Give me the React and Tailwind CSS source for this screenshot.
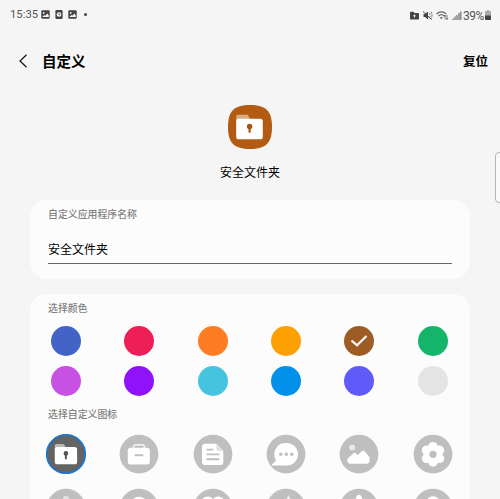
import React from "react";

const COLORS = [
  "bg-[#4463c6]", "bg-[#ee1f56]", "bg-[#ff7d22]", "bg-[#fca004]", "bg-[#9c5c24]", "bg-[#14b56a]",
  "bg-[#c751e2]", "bg-[#8f12fb]", "bg-[#46c3df]", "bg-[#0390ea]", "bg-[#5e5bf8]", "bg-[#e4e4e4]",
];

const G = "#bfbfbf";

function Folder({ hole }) {
  return (
    <>
      <path d="M8.8 17v-5.4c0-1 .6-1.6 1.6-1.6h6.4c.8 0 1.3.3 1.7 1l1.2 2.5v3z" fill="#fff" opacity=".55" />
      <rect x="8.8" y="13" width="22.3" height="17.3" rx="2.6" fill="#fff" />
      <circle cx="19.9" cy="19.4" r="2.3" fill={hole} />
      <rect x="18.9" y="20" width="2" height="5.4" rx=".8" fill={hole} />
    </>
  );
}

const ICONS = [
  <>
    <circle cx="20" cy="20.1" r="19.2" fill="#646464" stroke="#1c76c9" strokeWidth="1.8" />
    <Folder hole="#555" />
  </>,
  <>
    <path d="M14.6 15v-2.6c0-1 .6-1.6 1.6-1.6h7.6c1 0 1.6.6 1.6 1.6V15" fill="none" stroke="#eee" strokeWidth="1.8" />
    <rect x="8.8" y="13.7" width="22" height="16.7" rx="2.6" fill="#fff" />
    <path d="M16.500 21.300h7" stroke={G} strokeWidth="2" strokeLinecap="round" />
  </>,
  <>
    <path d="M12 9.7h11.3l7 7.2V28a3 3 0 0 1-3 3H12a3 3 0 0 1-3-3V12.7a3 3 0 0 1 3-3z" fill="#fff" />
    <path d="M23.3 9.7l7 7.2h-4.8a2.2 2.2 0 0 1-2.2-2.2z" fill="#e2e2e2" />
    <path d="M14.3 15.6h5.3M14.3 20.4h11.4M14.3 25.3h11.4" stroke={G} strokeWidth="1.9" strokeLinecap="round" />
  </>,
  <>
    <path d="M20.500 9C27 9 32 14 32 20.300s-5 11.300-11.500 11.300H6.800c-1 0-1.300-1-.6-1.600 1.800-1.200 3.200-2.300 3.600-4.100A11.300 11.300 0 0 1 20.500 9z" fill="#fff" />
    <circle cx="14.8" cy="20.2" r="1.7" fill={G} />
    <circle cx="20.3" cy="20.2" r="1.7" fill={G} />
    <circle cx="25.8" cy="20.2" r="1.7" fill={G} />
  </>,
  <>
    <circle cx="13.2" cy="13.4" r="3" fill="#e8e8e8" />
    <path d="M9 24.300l5.300-4.900c.9-.8 1.900-.7 2.700 0l1.800 1.600 4-3.800c.9-.8 2-.8 2.800.1l4.400 5.300c.5.7.7 1.300.7 2v1.600c0 2.100-1.300 3.500-3.400 3.500H11.600c-2 0-3.300-1.300-3.300-3 0-1 .2-1.800.7-2.400z" fill="#fff" />
  </>,
  <>
    <g fill="#fff">
      <circle cx="20" cy="20.200" r="9.200" />
      <circle cx="20" cy="12.600" r="4.700" />
      <circle cx="26.500" cy="16.200" r="4.700" />
      <circle cx="26.500" cy="24.400" r="4.700" />
      <circle cx="20" cy="28" r="4.700" />
      <circle cx="13.500" cy="24.400" r="4.700" />
      <circle cx="13.500" cy="16.200" r="4.700" />
    </g>
    <circle cx="20" cy="20.3" r="3.6" fill={G} />
  </>,
  <path d="M16.800 11.200a3.200 3.200 0 0 1 6.400 0z" fill="#e2e2e2" />,
  <ellipse cx="20" cy="14.500" rx="7.500" ry="5.800" fill="#fff" />,
  <path d="M20 31L9.500 19.500C5 13 11 7.700 16 8.700c2 .4 3.300 1.400 4 2.600.7-1.200 2-2.200 4-2.600 5-1 11 4.300 6.500 10.800z" fill="#fff" />,
  <path d="M22.500 7l1.300 2.900 2 2.600-6.800.8 1.800-2.500z" fill="#eee" />,
  <path d="M20 6.800c1.800 0 3 2 3.600 5.200l3 9H13.400l3-9C17 8.800 18.200 6.800 20 6.800z" fill="#fff" />,
  <ellipse cx="20" cy="15.400" rx="7" ry="7.200" fill="#fff" />,
];

function PhotoGlyph() {
  return (
    <svg width="9" height="9" viewBox="0 0 9 9">
      <rect x=".3" y=".3" width="8.400" height="8.400" rx="1.200" fill="#444" />
      <circle cx="2.700" cy="2.900" r=".9" fill="#f5f5f5" />
      <path d="M1.300 7l2-2 1 .8L6.300 3.600 7.800 5.400V7z" fill="#f5f5f5" />
    </svg>
  );
}

function StatusBar() {
  return (
    <div className="flex h-[30px] shrink-0 items-center justify-between pl-[10px] pr-[9px] text-[#555]">
      <div className="flex items-center">
        <span className="w-[31px] font-[Roboto,sans-serif] text-[11.300px] leading-none">15:35</span>
        <PhotoGlyph />
        <svg className="ml-[5px]" width="8" height="9" viewBox="0 0 8 9">
          <rect x=".4" y="0" width="7.200" height="9" rx="1.200" fill="#444" />
          <circle cx="4" cy="4.500" r="2.300" fill="#f5f5f5" />
          <path d="M4 3.200v1.500h1.200" stroke="#444" strokeWidth=".8" fill="none" />
        </svg>
        <span className="ml-[5px]"><PhotoGlyph /></span>
        <span className="ml-[7px] size-[3px] rounded-full bg-[#444]" />
      </div>
      <div className="flex items-center">
        <svg width="53" height="11" viewBox="0 0 53 11">
          <path d="M0 2.800c0-.6.3-1 1-1h2.500l1 1.200H8c.7 0 1 .4 1 1V8.500c0 .6-.4 1-1 1H1c-.6 0-1-.4-1-1z" fill="#444" />
          <path d="M4.500 4.500v3M3.300 5.800h2.400" stroke="#f5f5f5" strokeWidth=".9" />
          <path d="M13.500 4H15l3-2.500v8L15 7h-1.500z" fill="#444" />
          <path d="M13 1.500l8.500 8" stroke="#444" strokeWidth="1" />
          <path d="M19.500 3.200c.9 1.200.9 3.200 0 4.500M21 1.800c1.400 1.800 1.400 5 0 7" stroke="#555" strokeWidth=".9" fill="none" strokeDasharray="2 1" />
          <path d="M26.500 4c2.800-2.900 7-2.900 9.800 0M28.300 6c1.800-1.800 4.200-1.800 6 0" stroke="#666" strokeWidth="1.100" fill="none" />
          <path d="M29.700 7.300h3.200l-1.600 2z" fill="#555" />
          <path d="M35 5.500v4M37 5v4.500M34 6.500l1-1.500 1 1.500M36 8l1 1.500L38 8" stroke="#555" strokeWidth=".7" fill="none" />
          <path d="M43 10V8.500M45 10V6.500M47 10V5M49 10V3M50.800 10V1.500" stroke="#777" strokeWidth="1.300" />
        </svg>
        <span className="w-[22px] pt-[1px] font-[Roboto,sans-serif] text-[12px] leading-none tracking-[-0.500px]">39%</span>
        <svg width="6" height="10" viewBox="0 0 6 10">
          <path d="M2 0h2v1h1.200c.5 0 .8.300.8.800V6H0V1.800C0 1.300.3 1 .8 1H2z" fill="#aaa" />
          <path d="M0 5.500h6v3.700c0 .5-.3.800-.8.800H.8c-.5 0-.8-.3-.8-.8z" fill="#444" />
        </svg>
      </div>
    </div>
  );
}

export default function App() {
  return (
    <div className="relative flex h-[499px] w-[500px] flex-col overflow-hidden bg-[#f5f5f5] font-['Noto_Sans_CJK_SC',sans-serif] text-black">
      <StatusBar />
      <header className="flex h-[62px] shrink-0 items-center pl-[18px] pr-[12px]">
        <svg width="10" height="14" viewBox="0 0 10 14" fill="none" stroke="#111" strokeWidth="1.200">
          <path d="M8.500 .7L2 7l6.500 6.300" />
        </svg>
        <h1 className="ml-[14px] text-[14.500px] font-bold leading-none">自定义</h1>
        <button className="ml-auto text-[12.500px] font-bold leading-none">复位</button>
      </header>

      <div className="flex h-[108px] shrink-0 flex-col items-center pt-[13px]">
        <svg className="shrink-0" width="44" height="44" viewBox="0 0 44 44">
          <path d="M22 0C38 0 44 6 44 22s-6 22-22 22S0 38 0 22 6 0 22 0z" fill="#b35b12" />
          <path d="M8.200 17v-5.300c0-1.200.7-1.900 1.900-1.900h8.500c.8 0 1.400.3 1.800 1l1.400 2.700V17z" fill="#d9ac86" />
          <rect x="8.200" y="13.700" width="26.600" height="20.600" rx="2.600" fill="#fff" />
          <circle cx="21.600" cy="21.400" r="2.700" fill="#a9560f" />
          <rect x="20.500" y="22" width="2.200" height="5.800" rx=".9" fill="#a9560f" />
        </svg>
        <div className="mt-[15px] text-[12px] leading-[16px]">安全文件夹</div>
      </div>

      <section className="mx-[30px] h-[79px] shrink-0 rounded-[17px] bg-[#fcfcfc] px-[18px] pt-[6px]">
        <div className="text-[9.900px] font-medium leading-[16px] text-[#808080]">自定义应用程序名称</div>
        <div className="mt-[14px] h-[28px] border-b border-[#666] pt-[5px] text-[12px] leading-[16px]">安全文件夹</div>
      </section>

      <section className="mx-[30px] mt-[15px] h-[240px] shrink-0 rounded-[17px] bg-[#fcfcfc] pt-[6px]">
        <div className="pl-[18px] text-[9.900px] font-medium leading-[16px] text-[#808080]">选择颜色</div>
        <div className="-ml-[0.600px] mt-[10px] grid w-[440px] grid-cols-6 justify-items-center gap-y-[10px]">
          {COLORS.map((c, i) => (
            <div key={i} className={"flex size-[30px] items-center justify-center rounded-full " + c}>
              {i === 4 && (
                <svg width="18" height="14" viewBox="0 0 18 14" fill="none" stroke="#fff" strokeWidth="2.200">
                  <path d="M1.500 6.500l5.500 4.800L16.500 2" />
                </svg>
              )}
            </div>
          ))}
        </div>
        <div className="mt-[10px] pl-[18px] text-[9.900px] font-medium leading-[16px] text-[#808080]">选择自定义图标</div>
        <div className="-ml-[0.600px] mt-[12px] grid w-[440px] grid-cols-6 justify-items-center gap-y-[14px]">
          {ICONS.map((icon, i) => (
            <svg key={i} width="40" height="40" viewBox="0 0 40 40">
              {i > 0 && <circle cx="20" cy="20.100" r="19.400" fill={G} />}
              {icon}
            </svg>
          ))}
        </div>
      </section>

      <div className="absolute left-[494.500px] top-[152px] h-[51px] w-[20px] rounded-[4px] border border-[#b5b5b5] bg-[#fafafa]" />
    </div>
  );
}
